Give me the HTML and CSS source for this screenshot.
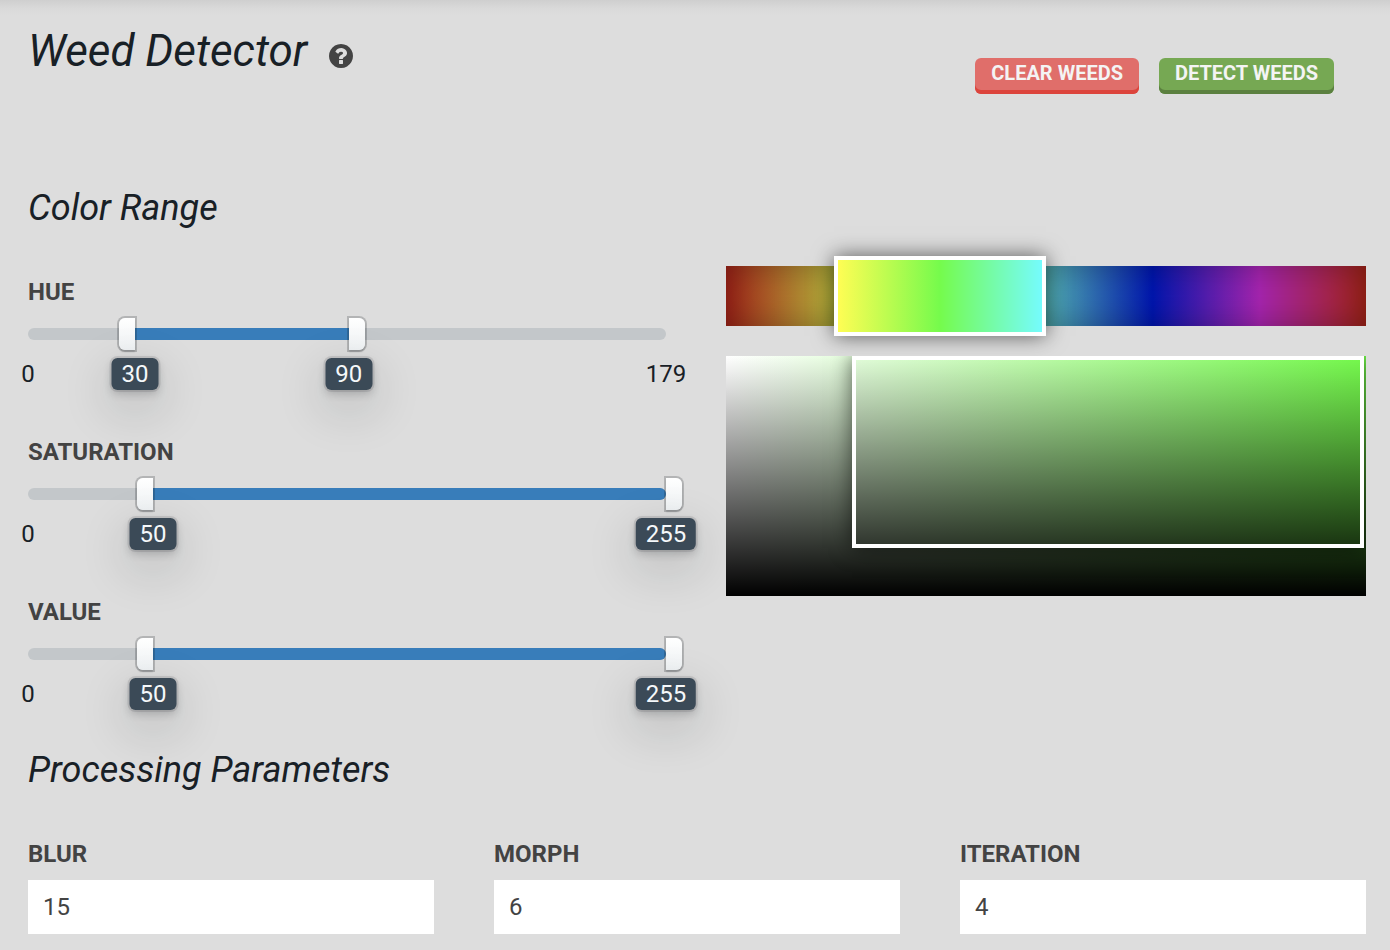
FILE: index.html
```html
<!DOCTYPE html>
<html lang="en">
<head>
<meta charset="utf-8">
<meta name="viewport" content="width=device-width, initial-scale=1">
<title>Weed Detector</title>
<link rel="stylesheet" href="styles.css">
</head>
<body>
<main class="panel">
  <header class="panel-header">
    <h1 class="title">Weed Detector</h1>
    <button class="help" type="button" aria-label="Help">
      <svg class="help-icon" viewBox="0 0 1536 1536" aria-hidden="true"><path fill="currentColor" d="M896 1248v-192q0-14-9-23t-23-9H672q-14 0-23 9t-9 23v192q0 14 9 23t23 9h192q14 0 23-9t9-23zm256-672q0-88-55.500-163T958 297t-170-41q-243 0-371 213-15 24 8 42l132 100q7 6 19 6 16 0 25-12 53-68 86-92 34-24 86-24 48 0 85.500 26t37.500 59q0 38-20 61t-68 45q-63 28-115.500 86.500T640 892v36q0 14 9 23t23 9h192q14 0 23-9t9-23q0-19 21.500-49.500T972 829q32-18 49-28.500t46-35 44.500-48 28-60.500 12.500-81zm384 192q0 209-103 385.500T1153.500 1433 768 1536t-385.500-103T103 1153.500 0 768t103-385.500T382.500 103 768 0t385.500 103T1433 382.500 1536 768z"/></svg>
    </button>
    <div class="actions">
      <button class="btn btn-red" type="button">CLEAR WEEDS</button>
      <button class="btn btn-green" type="button">DETECT WEEDS</button>
    </div>
  </header>

  <h2 class="section-title">Color Range</h2>
  <section class="color-range">
    <div class="sliders">
      <div class="slider-group">
        <h3 class="label">HUE</h3>
        <div class="slider">
          <div class="track"><div class="fill" style="left:16.76%;right:49.72%"></div></div>
          <input class="range range-low" type="range" min="0" max="179" value="30" aria-label="Hue minimum">
          <input class="range range-high" type="range" min="0" max="179" value="90" aria-label="Hue maximum">
        </div>
        <div class="axis">
          <span class="tick" style="left:0%">0</span>
          <span class="tick" style="left:100%">179</span>
          <span class="tick tag" style="left:16.76%">30</span>
          <span class="tick tag" style="left:50.28%">90</span>
        </div>
      </div>
      <div class="slider-group">
        <h3 class="label">SATURATION</h3>
        <div class="slider">
          <div class="track"><div class="fill" style="left:19.61%;right:0%"></div></div>
          <input class="range range-low" type="range" min="0" max="255" value="50" aria-label="Saturation minimum">
          <input class="range range-high" type="range" min="0" max="255" value="255" aria-label="Saturation maximum">
        </div>
        <div class="axis">
          <span class="tick" style="left:0%">0</span>
          <span class="tick tag" style="left:19.61%">50</span>
          <span class="tick tag" style="left:100%">255</span>
        </div>
      </div>
      <div class="slider-group">
        <h3 class="label">VALUE</h3>
        <div class="slider">
          <div class="track"><div class="fill" style="left:19.61%;right:0%"></div></div>
          <input class="range range-low" type="range" min="0" max="255" value="50" aria-label="Value minimum">
          <input class="range range-high" type="range" min="0" max="255" value="255" aria-label="Value maximum">
        </div>
        <div class="axis">
          <span class="tick" style="left:0%">0</span>
          <span class="tick tag" style="left:19.61%">50</span>
          <span class="tick tag" style="left:100%">255</span>
        </div>
      </div>
    </div>
    <div class="preview">
      <div class="hue-bar">
        <div class="hue-selection" style="left:16.9%;width:33.1%"></div>
      </div>
      <div class="sv-box">
        <div class="sv-selection" style="left:19.7%;width:80%;height:80%"></div>
      </div>
    </div>
  </section>

  <h2 class="section-title">Processing Parameters</h2>
  <form class="params">
    <div class="field">
      <label class="label" for="blur">BLUR</label>
      <input class="text-input" id="blur" type="text" inputmode="numeric" value="15">
    </div>
    <div class="field">
      <label class="label" for="morph">MORPH</label>
      <input class="text-input" id="morph" type="text" inputmode="numeric" value="6">
    </div>
    <div class="field">
      <label class="label" for="iteration">ITERATION</label>
      <input class="text-input" id="iteration" type="text" inputmode="numeric" value="4">
    </div>
  </form>
</main>
</body>
</html>
```

FILE: styles.css
```css
* {
  box-sizing: border-box;
}

body {
  margin: 0;
  background: #ddd;
  color: #182026;
  font-family: Roboto, "Liberation Sans", sans-serif;
  font-size: 24px;
  line-height: 28px;
}

h1,
h2,
h3 {
  margin: 0;
}

button,
input {
  font: inherit;
}

.panel {
  padding: 24px 24px 16px 28px;
  background: linear-gradient(#cfcfcf, #d9d9d9 8px, #ddd 16px);
}

.panel-header {
  display: flex;
  align-items: flex-start;
  margin-bottom: 92px;
}

.title {
  font-size: 44px;
  font-style: italic;
  font-weight: 400;
  line-height: 54px;
}

.help {
  display: flex;
  margin: 20px 0 0 22px;
  padding: 0;
  border: 0;
  background: none;
  color: #434343;
  cursor: pointer;
}

.help-icon {
  width: 24px;
  height: 24px;
}

.actions {
  display: flex;
  gap: 20px;
  margin: 34px 32px 0 auto;
}

.btn {
  height: 36px;
  padding: 0 16px 6px;
  border: 0;
  border-radius: 6px;
  color: #f4f4f4;
  font-size: 20px;
  font-weight: 700;
  line-height: 30px;
  cursor: pointer;
}

.btn-red {
  background: #e06e6a;
  box-shadow: inset 0 -4px #dc443c;
}

.btn-green {
  background: #76a853;
  box-shadow: inset 0 -4px #5b803f;
}

.section-title {
  font-size: 36px;
  font-style: italic;
  font-weight: 400;
  line-height: 44px;
}

.color-range {
  display: grid;
  grid-template-columns: calc(50% - 31px) 1fr;
  gap: 60px;
  margin: 36px 0 38px;
}

.sliders {
  display: flex;
  flex-direction: column;
  gap: 48px;
  padding-top: 12px;
}

.label {
  display: block;
  color: #434343;
  font-size: 24px;
  font-weight: 700;
  line-height: 28px;
}

.slider {
  position: relative;
  margin-top: 12px;
  padding: 10px 0;
}

.track {
  position: relative;
  height: 12px;
  overflow: hidden;
  border-radius: 6px;
  background: #c3c7ca;
}

.fill {
  position: absolute;
  top: 0;
  bottom: 0;
  background: #387dba;
}

.range {
  position: absolute;
  top: 0;
  width: calc(100% + 16px);
  height: 32px;
  margin: 0;
  appearance: none;
  background: none;
  pointer-events: none;
}

.range-low {
  left: -16px;
}

.range-high {
  left: 0;
}

.range::-webkit-slider-thumb {
  width: 16px;
  height: 32px;
  appearance: none;
  background: linear-gradient(#fff, #eff2f4);
  box-shadow: 0 0 0 2px rgba(16, 22, 26, 0.2), 0 2px 2px rgba(16, 22, 26, 0.2);
  cursor: pointer;
  pointer-events: auto;
}

.range-low::-webkit-slider-thumb {
  border-radius: 6px 0 0 6px;
}

.range-high::-webkit-slider-thumb {
  border-radius: 0 6px 6px 0;
}

.axis {
  position: relative;
  height: 32px;
  margin-top: 8px;
}

.tick {
  position: absolute;
  top: 0;
  line-height: 32px;
  transform: translateX(-50%);
}

.tag {
  padding: 0 10px;
  border-radius: 6px;
  background: #3b4a57;
  color: #f5f8fa;
  box-shadow: 0 0 0 2px rgba(16, 22, 26, 0.1), 0 4px 8px rgba(16, 22, 26, 0.2),
    0 16px 48px 4px rgba(16, 22, 26, 0.16);
}

.preview {
  display: flex;
  flex-direction: column;
  gap: 30px;
}

.hue-bar {
  position: relative;
  height: 60px;
  background:
    linear-gradient(rgba(0, 0, 0, 0.28), rgba(0, 0, 0, 0.28)),
    linear-gradient(to right, #ea3323, #fffd54, #75fb4c, #75fbfd, #001ef5, #ea33f7, #ea3323);
  box-shadow: inset 0 0 40px rgba(0, 0, 0, 0.34);
}

.hue-selection {
  position: absolute;
  top: -10px;
  bottom: -10px;
  border: 4px solid #fff;
  background: linear-gradient(to right, #fffd54, #75fb4c, #75fbfd) padding-box;
  box-shadow: 0 0 20px rgba(0, 0, 0, 0.6);
}

.sv-box {
  position: relative;
  height: 240px;
  overflow: hidden;
  background:
    linear-gradient(transparent, #000),
    linear-gradient(to right, #fff, #75fb4c);
}

.sv-selection {
  position: absolute;
  top: 0;
  border: 4px solid #fff;
  box-shadow: 0 0 20px rgba(0, 0, 0, 0.6);
}

.params {
  display: grid;
  grid-template-columns: repeat(3, 1fr);
  gap: 60px;
  margin-top: 48px;
}

.text-input {
  display: block;
  width: 100%;
  height: 54px;
  margin-top: 12px;
  padding: 0 15px;
  border: 0;
  border-radius: 0;
  background: #fff;
  color: #434343;
}
```
